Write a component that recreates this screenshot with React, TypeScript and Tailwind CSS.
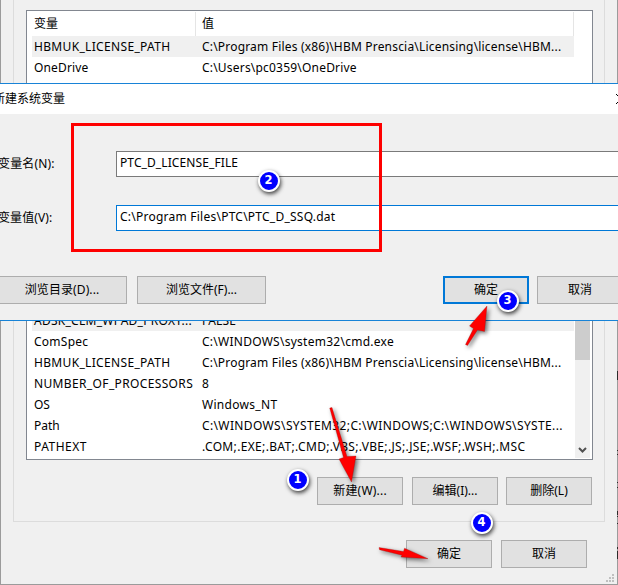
import React from "react";

const T = ({ children, className = "" }: { children: React.ReactNode; className?: string }) => (
  <span className={`whitespace-nowrap ${className}`}>{children}</span>
);

type RowData = { name: string; value: string; nameCls?: string; valueCls?: string; active?: boolean };

const Row = ({ name, value, nameCls = "", valueCls = "", active }: RowData) => (
  <div className={`ml-[5px] flex h-[21px] w-[542px] shrink-0 items-center pl-0.5 ${active ? "bg-[#f0f0f0]" : ""}`}>
    <div className="w-[168px] shrink-0"><T className={nameCls}>{name}</T></div>
    <T className={valueCls}>{value}</T>
  </div>
);

const licenseRow: RowData = {
  name: "HBMUK_LICENSE_PATH",
  value: "C:\\Program Files (x86)\\HBM Prenscia\\Licensing\\license\\HBM...",
  nameCls: "tracking-[0.33px]",
  valueCls: "tracking-[0.19px]",
};

const userRows: RowData[] = [
  { ...licenseRow, active: true },
  { name: "OneDrive", value: "C:\\Users\\pc0359\\OneDrive", nameCls: "tracking-[0.15px]", valueCls: "tracking-[0.2px]" },
];

const systemRows: RowData[] = [
  { name: "ADSK_CLM_WPAD_PROXY...", value: "FALSE", active: true, nameCls: "tracking-[0.27px]", valueCls: "tracking-[0.2px]" },
  { name: "ComSpec", value: "C:\\WINDOWS\\system32\\cmd.exe", nameCls: "tracking-[0.25px]", valueCls: "tracking-[0.26px]" },
  licenseRow,
  { name: "NUMBER_OF_PROCESSORS", value: "8", nameCls: "tracking-[0.36px]" },
  { name: "OS", value: "Windows_NT", valueCls: "tracking-[0.3px]" },
  { name: "Path", value: "C:\\WINDOWS\\SYSTEM32;C:\\WINDOWS;C:\\WINDOWS\\SYSTE...", valueCls: "tracking-[0.37px]" },
  { name: "PATHEXT", value: ".COM;.EXE;.BAT;.CMD;.VBS;.VBE;.JS;.JSE;.WSF;.WSH;.MSC", nameCls: "tracking-[0.5px]", valueCls: "tracking-[0.34px]" },
];

const Button = ({ children, className = "", primary }: { children: React.ReactNode; className?: string; primary?: boolean }) => (
  <button className={`flex h-7 shrink-0 items-center justify-center whitespace-nowrap bg-[#e1e1e1] ${primary ? "border-2 border-[#0078d7]" : "border border-[#adadad]"} ${className}`}>
    {children}
  </button>
);

const Badge = ({ n, className }: { n: number; className: string }) => (
  <div className={`absolute flex size-[22px] items-center justify-center rounded-full border-[2.5px] border-white bg-[#0000fe] font-['DejaVu_Sans'] text-[11.5px] leading-none font-bold text-white shadow-[1px_2px_4px_rgba(0,0,0,0.75)] ${className}`}>
    {n}
  </div>
);

export default function App() {
  return (
    <div className="relative flex h-[585px] w-[618px] flex-col overflow-hidden bg-[#f0f0f0] font-['Noto_Sans','Noto_Sans_CJK_SC',sans-serif] text-[12px] leading-[18px] text-black">
      <section className="flex h-[83px] shrink-0 border-x border-[#9b9b9b]">
        <div className="ml-3 w-[592px] border-x border-[#dcdcdc] pt-2.5 pl-3">
          <div className="h-[73px] w-[567px] border-x border-t border-[#828790] bg-white pt-px">
            <div className="ml-[5px] flex h-6 w-[542px] border-r border-[#e5e5e5] pl-0.5">
              <div className="flex w-[162px] items-center border-r border-[#e5e5e5]">变量</div>
              <div className="flex items-center pl-1.5">值</div>
            </div>
            {userRows.map((r) => <Row key={r.name} {...r} />)}
          </div>
        </div>
      </section>

      <section className="h-[238px] shrink-0 border-y border-[#1883d7] bg-[#f0f0f0]">
        <header className="flex h-[30px] items-center justify-between bg-white">
          <span className="-ml-[7px]">新建系统变量</span>
          <svg className="-mr-[8px]" width="10" height="10" viewBox="0 0 10 10"><path d="M0 0L10 10M10 0L0 10" stroke="#000" /></svg>
        </header>
        <div className="mt-[37px] flex h-[26px] items-center">
          <div className="w-[116px] shrink-0"><T className="-ml-0.5 tracking-[0.15px]">变量名(N):</T></div>
          <div className="flex h-full grow items-center border-y border-l border-[#7a7a7a] bg-white pb-0.5 pl-[3px]">
            <T className="tracking-[0.1px]">PTC_D_LICENSE_FILE</T>
          </div>
        </div>
        <div className="mt-7 flex h-[26px] items-center">
          <div className="w-[116px] shrink-0"><T className="-ml-0.5 tracking-[0.1px]">变量值(V):</T></div>
          <div className="flex h-full grow items-center border-y border-l border-[#0078d7] bg-white pb-0.5 pl-[3px]">
            <T className="tracking-[0.24px]">C:\Program Files\PTC\PTC_D_SSQ.dat</T>
          </div>
        </div>
        <div className="mt-[45px] flex">
          <Button className="-ml-[3px] w-[130px] tracking-[0.1px]">浏览目录(D)...</Button>
          <Button className="ml-2.5 w-[129px]">浏览文件(F)...</Button>
          <Button primary className="ml-[177px] w-[86px]">确定</Button>
          <Button className="ml-2 w-[86px]">取消</Button>
        </div>
      </section>

      <section className="flex h-[264px] shrink-0 flex-col border-x border-b border-[#9b9b9b]">
        <div className="ml-3 h-[201px] w-[592px] border-x border-b border-[#dcdcdc] pl-3">
          <div className="flex h-[139px] w-[567px] border-x border-b border-[#828790] bg-white">
            <div className="flex h-[138px] w-[548px] flex-col justify-end overflow-hidden pb-0.5">
              {systemRows.map((r) => <Row key={r.name} {...r} />)}
            </div>
            <div className="flex h-[137px] w-[15px] flex-col justify-between bg-[#f0f0f0]">
              <div className="h-[39px] bg-[#cdcdcd]" />
              <svg className="mb-1 ml-[3px]" width="9" height="7" viewBox="0 0 9 7"><path d="M1 1L4.5 4.5L8 1" fill="none" stroke="#505050" strokeWidth="2" /></svg>
            </div>
          </div>
          <div className="mt-[17px] ml-[291px] flex">
            <Button className="w-[86px] tracking-[0.2px]">新建(W)...</Button>
            <Button className="ml-[9px] w-[86px]">编辑(I)...</Button>
            <Button className="ml-2 w-[86px]">删除(L)</Button>
          </div>
        </div>
        <div className="mt-[18px] ml-[405px] flex gap-[9px]">
          <Button className="w-[86px]">确定</Button>
          <Button className="w-[86px]">取消</Button>
        </div>
      </section>

      <svg className="absolute inset-0" width="618" height="585" viewBox="0 0 618 585">
        <path fill="#bfbfbf" d="M612 574h2v2h-2zM612 577h2v2h-2zM609 577h2v2h-2zM612 580h2v2h-2zM609 580h2v2h-2zM606 580h2v2h-2z" />
        <path fill="#2b2b2b" d="M617 371h1v9h-1zM617 450h1v1h-1zM617 454h1v1h-1zM617 482h1v1h-1zM617 487h1v1h-1zM617 511h1v4h-1zM617 516h1v1h-1zM617 523h1v1h-1zM617 547h1v2h-1zM617 551h1v8h-1z" />
        <g fill="#fe0000" stroke="#8f1010" strokeWidth="0.3" className="drop-shadow-[2px_2px_2px_rgba(0,0,0,0.55)]">
          <path d="M487 306L484.500 331.500L477.500 330L467.500 345.500L465.500 344.500L473.500 328.500L469.500 326Z" />
          <path d="M329.700 408L332 407.500L347 456.500L356 456L351.500 482L339 459L343.500 457.500Z" />
          <path d="M379 547.500L379.500 549.800L402 555.200L401 557L428 558.700L404.500 548.200L403.500 551.500Z" />
        </g>
      </svg>
      <div className="absolute top-[123px] left-[71px] h-[129px] w-[311px] border-[3px] border-[#fe0000]" />
      <Badge n={2} className="top-[169.5px] left-[257.5px]" />
      <Badge n={3} className="top-[289.5px] left-[496.5px]" />
      <Badge n={1} className="top-[468.5px] left-[286.5px]" />
      <Badge n={4} className="top-[511.5px] left-[470.5px]" />
    </div>
  );
}
